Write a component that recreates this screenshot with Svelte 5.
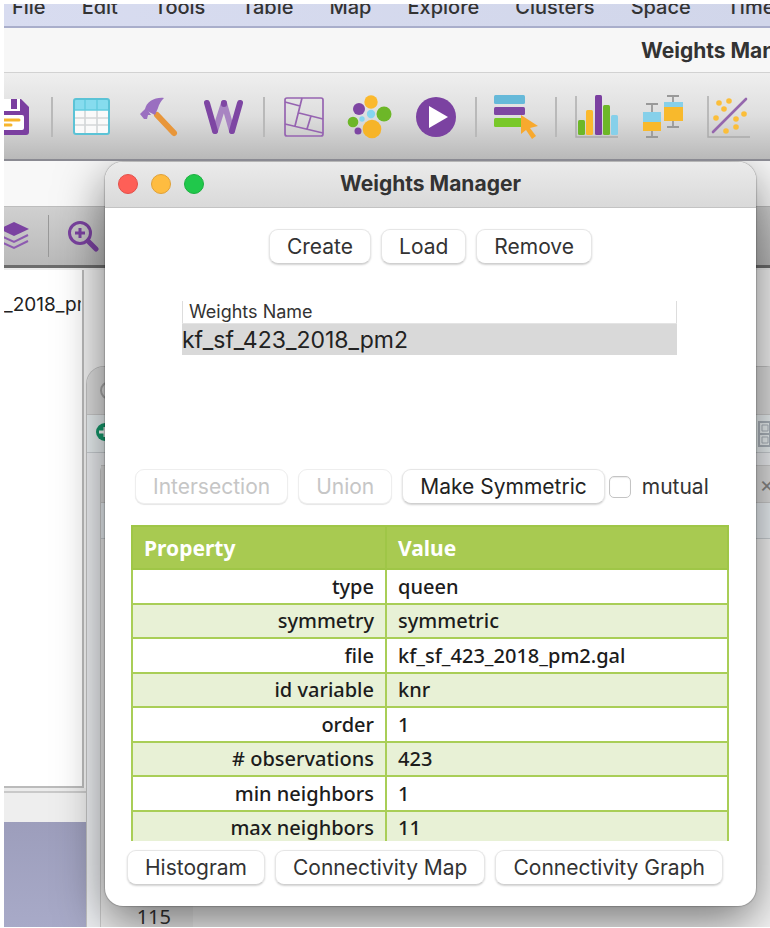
<script>
  const menus = ['File', 'Edit', 'Tools', 'Table', 'Map', 'Explore', 'Clusters', 'Space', 'Time'];
  const properties = [
    ['type', 'queen'],
    ['symmetry', 'symmetric'],
    ['file', 'kf_sf_423_2018_pm2.gal'],
    ['id variable', 'knr'],
    ['order', '1'],
    ['# observations', '423'],
    ['min neighbors', '1'],
    ['max neighbors', '11']
  ];
  const tools = [
    'save', '|', 'table', 'hammer', 'weights', '|', 'map', 'cartogram', 'play', '|',
    'select', '|', 'histogram', 'boxplot', 'scatter'
  ];
  let mutual = $state(false);
</script>

<div class="screen">
  <nav class="menubar">
    {#each menus as menu}<button>{menu}</button>{/each}
  </nav>
  <header class="main-title">Weights Manager</header>
  <div class="toolbar">
    {#each tools as tool}
      {#if tool === '|'}
        <span class="sep"></span>
      {:else}
        <button class="tool" aria-label={tool}>
          <svg viewBox="0 0 54 54">
            {#if tool === 'save'}
              <path d="M9 9h27l8 8v25a3 3 0 0 1-3 3H9z" fill="#7b3fa0" />
              <path d="M14 9h21v12H14z" fill="#fff" />
              <path d="M26 9h6v10h-6z" fill="#7b3fa0" />
              <rect x="11" y="25" width="28" height="15" rx="2" fill="#fff" />
              <path d="M13 30h21M13 35h13" stroke="#f7b52c" stroke-width="3" stroke-linecap="round" />
            {:else if tool === 'table'}
              <rect x="9" y="9" width="35" height="35" rx="2" fill="#fafafa" />
              <path d="M9 9h35v11H9z" fill="#86dcee" />
              <path d="M20 20v24M32 20v24M9 28h35M9 35h35" stroke="#d3d6d8" stroke-width="1.6" />
              <path d="M20 10v10M32 10v10M9 20h35" stroke="#63cbdf" stroke-width="1.4" />
              <rect x="9" y="9" width="35" height="35" rx="2" fill="none" stroke="#5bc3d6" stroke-width="2" />
            {:else if tool === 'hammer'}
              <path d="M26 25l17 18" stroke="#e8963a" stroke-width="6" stroke-linecap="round" />
              <path d="M33 8C25 7 15 11 14 20l10 5 3-7c1-4 3-7 6-10z" fill="#9a6fc0" />
              <path d="M15 18l5 7-3 0-1 4-3 0-4-5 3-3z" fill="#9a6fc0" />
            {:else if tool === 'weights'}
              <path d="M18 41L27 13l8 28" fill="none" stroke="#a884c2" stroke-width="6" stroke-linecap="round" stroke-linejoin="round" />
              <path d="M10 13l8 28M27 13v1M35 41l8-28" fill="none" stroke="#7e46a3" stroke-width="6" stroke-linecap="round" />
            {:else if tool === 'map'}
              <g fill="none" stroke="#9664b1" stroke-width="1.7">
                <rect x="8" y="8" width="38" height="38" rx="2" />
                <path d="M8 12l15 4M25 8l-7 28M22 23l24 6M8 34l38 9M34 26l-4 13" />
              </g>
            {:else if tool === 'cartogram'}
              <circle cx="28" cy="12" r="6.7" fill="#fbb92d" />
              <circle cx="16" cy="19" r="6" fill="#7e46a3" />
              <circle cx="41" cy="24" r="7.5" fill="#6db728" />
              <circle cx="28" cy="24" r="4.2" fill="#86d5ef" />
              <circle cx="19" cy="29" r="2.7" fill="#86d5ef" />
              <circle cx="10" cy="32" r="5.3" fill="#6db728" />
              <circle cx="29" cy="39" r="9.3" fill="#f6b429" />
              <circle cx="15" cy="41" r="3.5" fill="#7e46a3" />
            {:else if tool === 'play'}
              <circle cx="27" cy="27" r="20" fill="#7b42a1" />
              <path d="M20 16l19 11-19 11z" fill="#fff" />
            {:else if tool === 'select'}
              <rect x="5" y="5" width="31" height="9" rx="1.5" fill="#66b9d9" />
              <rect x="5" y="17" width="31" height="8" rx="1.5" fill="#7e46a3" />
              <rect x="5" y="28" width="28" height="9" rx="1.5" fill="#78c829" />
              <path d="M32 25l17 11-8 2 6 8-4 3-6-9-5 4z" fill="#f8a92e" />
            {:else if tool === 'histogram'}
              <path d="M7 6v41h42" fill="none" stroke="#aaa" stroke-width="1.4" />
              <rect x="9" y="30" width="7" height="15" rx="1.5" fill="#6db728" />
              <rect x="17" y="20" width="7" height="25" rx="1.5" fill="#fbb92d" />
              <rect x="26" y="5" width="7" height="40" rx="1.5" fill="#7b3fa0" />
              <rect x="34" y="15" width="7" height="30" rx="1.5" fill="#6db728" />
              <rect x="42" y="25" width="7" height="20" rx="1.5" fill="#86d0ea" />
            {:else if tool === 'boxplot'}
              <path d="M17 14v33M11 14h12M11 47h12M38 6v31M32 6h12M32 37h12" stroke="#999" stroke-width="1.8" />
              <path d="M8 22h18v10H8zM29 12h19v5H29z" fill="#86d0ea" />
              <path d="M8 32h18v9H8zM29 17h19v14H29z" fill="#f8b92c" />
            {:else if tool === 'scatter'}
              <path d="M7 6v41h42" fill="none" stroke="#aaa" stroke-width="1.4" />
              <path d="M12 42L45 9" stroke="#9567ad" stroke-width="2.6" stroke-linecap="round" />
              <g fill="#fbbe3a">
                <circle cx="18" cy="13" r="2.8" /><circle cx="28" cy="11" r="2.8" />
                <circle cx="23" cy="19" r="2.8" /><circle cx="15" cy="28" r="2.8" />
                <circle cx="43" cy="24" r="2.8" /><circle cx="35" cy="29" r="2.8" />
                <circle cx="35" cy="37" r="2.8" /><circle cx="25" cy="41" r="2.8" />
              </g>
            {/if}
          </svg>
        </button>
      {/if}
    {/each}
  </div>

  <div class="desktop">
    <section class="map-window">
      <div class="map-title"></div>
      <div class="map-tools">
        <button aria-label="Layers">
          <svg viewBox="0 0 32 32">
            <path d="M14 2l15 7-15 7L-1 9z" fill="#7b42a1" />
            <path d="M-1 15l15 7 14-7M-1 21l15 7 14-7" fill="none" stroke="#8d5bb0" stroke-width="2" />
          </svg>
        </button>
        <span></span>
        <button aria-label="Zoom in">
          <svg viewBox="0 0 32 32" fill="none" stroke="#7b42a1">
            <circle cx="13" cy="13" r="10.5" stroke-width="3" />
            <path d="M8 13h10M13 8v10" stroke-width="3" />
            <path d="M21 21l8 8" stroke-width="5" stroke-linecap="round" />
          </svg>
        </button>
      </div>
      <div class="map-body">
        <aside><p>_2018_pm2</p></aside>
      </div>
      <div class="map-status"></div>
    </section>

    <section class="editor">
      <div class="editor-title"><i></i></div>
      <div class="editor-tools">
        <svg width="22" height="22" viewBox="0 0 22 22">
          <circle cx="11" cy="9" r="9" fill="#159a6c" /><path d="M11 4v10M5 9h12" stroke="#fff" stroke-width="3" />
        </svg>
        <svg width="26" height="26" viewBox="0 0 26 26" fill="none" stroke="#adb5bd" stroke-width="2">
          <path d="M2 1h22v24H2zM2 13h22M13 1v24" /><path d="M5 4h6v6H5zM5 16h6v6H5z" stroke-width="1" />
        </svg>
      </div>
      <div class="editor-pane">
        <div class="tabs"><button aria-label="Close tab">×</button></div>
        <div class="pathbar"></div>
        <div class="code"><span>115</span></div>
      </div>
    </section>

    <section class="dialog" role="dialog" aria-label="Weights Manager">
      <header>
        <div class="lights"><i></i><i></i><i></i></div>
        <h1>Weights Manager</h1>
      </header>
      <div class="row top">
        <button>Create</button>
        <button>Load</button>
        <button>Remove</button>
      </div>
      <table class="list">
        <thead><tr><th>Weights Name</th></tr></thead>
        <tbody><tr><td>kf_sf_423_2018_pm2</td></tr></tbody>
      </table>
      <div class="row middle">
        <button disabled>Intersection</button>
        <button disabled>Union</button>
        <button class="strong">Make Symmetric</button>
        <label><input type="checkbox" bind:checked={mutual} />mutual</label>
      </div>
      <div class="details">
        <table>
          <thead><tr><th>Property</th><th>Value</th></tr></thead>
          <tbody>
            {#each properties as [name, value]}
              <tr><td>{name}</td><td>{value}</td></tr>
            {/each}
          </tbody>
        </table>
      </div>
      <div class="row bottom">
        <button>Histogram</button>
        <button>Connectivity Map</button>
        <button>Connectivity Graph</button>
      </div>
    </section>
  </div>
</div>

<style>
  :global(body) { background: #fff; }
  .screen, .screen * { box-sizing: border-box; }
  .screen {
    display: flex;
    flex-direction: column;
    min-height: calc(100vh - 5px);
    margin: 4px 0 1px 4px;
    overflow: hidden;
    font-family: Inter, "Liberation Sans", sans-serif;
    color: #333;
  }
  button { font: inherit; color: inherit; border: 0; padding: 0; background: none; }
  svg { display: block; }

  .menubar {
    display: flex;
    align-items: flex-end;
    gap: 36px;
    height: 24px;
    padding: 0 8px 8px;
    background: linear-gradient(90deg, #d8dcf0, #d1d6ea);
    border-bottom: 2px solid #a9aecb;
    font-size: 20px;
    font-weight: 500;
    line-height: 22px;
    overflow: hidden;
  }
  .menubar button { flex: none; }
  .main-title {
    height: 45px;
    padding-left: 637px;
    background: #f7f7f7;
    border-bottom: 1px solid #d2d2d2;
    font-size: 21px;
    font-weight: 700;
    line-height: 46px;
    white-space: nowrap;
    overflow: hidden;
  }
  .toolbar {
    display: flex;
    align-items: center;
    gap: 12px;
    height: 88px;
    padding-top: 2px;
    background: linear-gradient(#efefef, #dedede 50%, #b9b9b9);
    border-bottom: 2px solid #8a8a92;
  }
  .toolbar > :first-child { margin-left: -19px; }
  .tool { flex: none; width: 54px; height: 54px; }
  .tool svg { width: 54px; height: 54px; }
  .sep { flex: none; width: 2px; height: 40px; background: #b9b9b9; }

  .desktop {
    position: relative;
    flex: 1;
    min-height: 766px;
    overflow: hidden;
    background: linear-gradient(#9c9dbb, #a8aac8) 0 100% / 82px 110px no-repeat, #ececec;
  }
  .map-window { display: flex; flex-direction: column; }
  .map-title { height: 45px; background: #f8f8f8; }
  .map-tools {
    display: flex;
    align-items: center;
    gap: 18px;
    height: 62px;
    margin-bottom: 2px;
    background: linear-gradient(#d0d0d0, #b9b9b9);
    border-top: 1px solid #bdbdbd;
    border-bottom: 3px solid #6c6c6c;
  }
  .map-tools button { width: 32px; height: 32px; }
  .map-tools button:first-child { width: 27px; margin-left: -1px; }
  .map-tools button:first-child svg { width: 32px; margin-left: -3px; }
  .map-tools svg { height: 32px; }
  .map-tools span { width: 1px; height: 42px; background: #999; }
  .map-body { height: 518px; background: #f4f4f4; }
  .map-body aside { width: 80px; height: 518px; padding: 23px 1px 0 0; background: #fff; border: solid #bbb; border-width: 0 2px 2px 0; }
  .map-body p { margin: 0; font-size: 19px; line-height: 24px; color: #222; overflow: hidden; }
  .map-status { height: 31px; margin-top: 3px; border-top: 2px solid #c9c9c9; background: #eee; }

  .editor {
    position: absolute;
    left: 82px;
    right: -14px;
    top: 205px;
    bottom: 0;
    display: flex;
    flex-direction: column;
    background: #eff1f4;
    border: 1px solid #c4c4c4;
    border-bottom: 0;
    border-radius: 18px 18px 0 0;
    overflow: hidden;
  }
  .editor-title { display: flex; align-items: center; height: 48px; padding-left: 13px; background: #e0e0e0; border-bottom: 1px solid #ccc; }
  .editor-title i { width: 19px; height: 19px; border: 2px solid #aaa; border-radius: 50%; }
  .editor-tools { display: flex; align-items: center; justify-content: space-between; height: 38px; padding: 0 0 0 7px; background: #edf3f5; border-bottom: 1px solid #ccd1d5; }
  .editor-pane { display: flex; flex-direction: column; flex: 1; margin: 12px 0 0 13px; border-left: 1px solid #ccc; border-radius: 6px 0 0; }
  .tabs { display: flex; justify-content: flex-end; align-items: center; height: 38px; padding-right: 9px; background: #e0e0e0; border: solid #ccc; border-width: 1px 0; color: #888; font-size: 22px; line-height: 22px; }
  .pathbar { height: 36px; background: #edf2f6; border-bottom: 1px solid #ccd1d5; }
  .code { display: flex; flex: 1; background: linear-gradient(90deg, #eee 92px, #f7f7f7 92px); font: 20px/20px "Noto Sans", sans-serif; align-items: flex-end; }
  .code span { width: 70px; text-align: right; }

  .dialog {
    position: absolute;
    left: 101px;
    right: 14px;
    top: 1px;
    display: flex;
    flex-direction: column;
    background: #fff;
    border-radius: 18px;
    box-shadow: 0 0 1px 1px rgba(0, 0, 0, .18), 0 16px 48px rgba(0, 0, 0, .52);
    font-size: 21px;
    line-height: 24px;
  }
  .dialog header {
    display: flex;
    align-items: center;
    height: 46px;
    padding: 0 13px 1px;
    background: linear-gradient(#ebebeb, #d9d9d9);
    border-bottom: 1px solid #c3c3c3;
    border-radius: 18px 18px 0 0;
  }
  .lights { display: flex; gap: 13px; flex: 1; }
  .lights i { width: 20px; height: 20px; border-radius: 50%; background: #fe5f57; border: 1px solid #e2504a; }
  .lights i:nth-child(2) { background: #febc40; border-color: #e0a137; }
  .lights i:nth-child(3) { background: #20c84b; border-color: #1bb040; }
  h1 { margin: 0; font-size: 21px; font-weight: 700; line-height: 24px; }
  .dialog header::after { content: ""; flex: 1; }
  .row { display: flex; align-items: center; gap: 10px; }
  .row button {
    height: 35px;
    padding: 0 17px;
    background: #fff;
    border: 1px solid #e6e6e6;
    border-bottom-color: #d0d0d0;
    border-radius: 9px;
    box-shadow: 0 1px 2px rgba(0, 0, 0, .18);
    white-space: nowrap;
  }
  .row button:disabled { color: #c6c6c6; border-color: #eee; box-shadow: 0 1px 1px rgba(0, 0, 0, .1); }
  .row .strong { color: #222; }
  .top { justify-content: center; padding-top: 21px; }
  .list { margin: 37px 79px 114px 77px; border-spacing: 0; }
  .list th { height: 22px; padding: 0 6px; border: solid #ddd; border-width: 0 1px; font-size: 18px; font-weight: 400; line-height: 22px; text-align: left; }
  .list td { height: 32px; padding: 0; background: #d9d9d9; color: #222; font-size: 23px; line-height: 30px; border-top: 1px solid #e4e4e4; }
  .middle { padding-left: 30px; }
  .middle label { display: flex; align-items: center; gap: 11px; margin-left: -6px; }
  input { appearance: none; width: 22px; height: 22px; margin: 0; border: 1px solid #c4c4c4; border-radius: 5px; background: #fff; box-shadow: inset 0 1px 1px rgba(0, 0, 0, .08); }
  .details { height: 316px; margin: 21px 27px 0 26px; overflow: hidden; font-family: "Noto Sans", sans-serif; font-size: 20px; color: #1c1c1c; }
  .details table { width: 100%; table-layout: fixed; border-collapse: collapse; }
  .details th, .details td { padding: 0 11px; border: 2px solid #a9ce57; line-height: 30px; }
  .details th { height: 43px; background: #a8ca51; border-color: #9fc647; color: #fff; font-size: 21px; text-align: left; }
  .details td { font-weight: 500; }
  .details th:first-child { width: 254px; }
  .details tbody tr { height: 35px; }
  .details tbody tr:nth-child(even) { height: 34px; background: #e8f1d6; }
  .details td:first-child { text-align: right; }
  .bottom { padding: 9px 22px 21px; }
</style>
